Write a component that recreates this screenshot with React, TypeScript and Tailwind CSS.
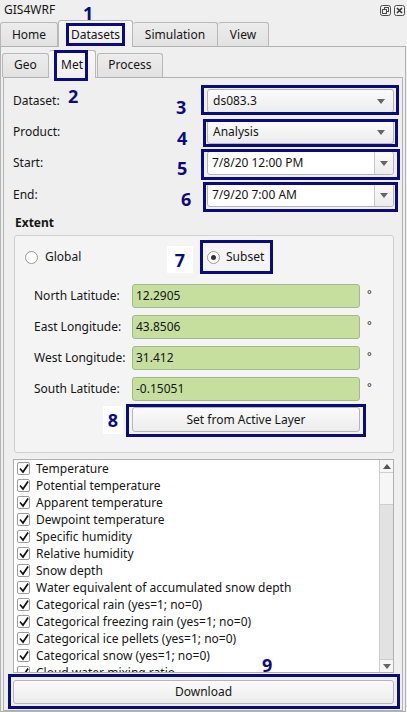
import React from 'react';

const items = [
  'Temperature',
  'Potential temperature',
  'Apparent temperature',
  'Dewpoint temperature',
  'Specific humidity',
  'Relative humidity',
  'Snow depth',
  'Water equivalent of accumulated snow depth',
  'Categorical rain (yes=1; no=0)',
  'Categorical freezing rain (yes=1; no=0)',
  'Categorical ice pellets (yes=1; no=0)',
  'Categorical snow (yes=1; no=0)',
  'Cloud water mixing ratio',
];

function Tri({ up = false }: { up?: boolean }) {
  return (
    <svg width="8" height="5" viewBox="0 0 8 5">
      {up ? <path d="M0 5 L4 0 L8 5 Z" fill="#555" /> : <path d="M0 0 L8 0 L4 5 Z" fill="#666" />}
    </svg>
  );
}

function Combo({ text }: { text: string }) {
  return (
    <div className="flex h-[24px] w-full items-center justify-between rounded-[3px] border border-[#b5b5b5] bg-gradient-to-b from-[#fbfbfb] to-[#ececec] pl-[5px] pr-[8px]">
      <span>{text}</span>
      <Tri />
    </div>
  );
}

function DateEdit({ text }: { text: string }) {
  return (
    <div className="flex h-[24px] w-full items-stretch rounded-[3px] border border-[#b5b5b5] bg-white">
      <span className="flex flex-1 items-center pl-[4px]">{text}</span>
      <span className="flex w-[19px] items-center justify-center rounded-r-[3px] border-l border-[#c8c8c8] bg-gradient-to-b from-[#fbfbfb] to-[#ececec]">
        <Tri />
      </span>
    </div>
  );
}

function Num({ n, className }: { n: string; className: string }) {
  return (
    <span className={`pointer-events-none absolute font-['Noto_Sans',sans-serif] text-[18px] font-bold leading-none text-[#0b0b80] ${className}`}>
      {n}
    </span>
  );
}

function Check() {
  return (
    <span className="flex h-[13px] w-[13px] shrink-0 items-center justify-center rounded-[2px] border border-[#9c9c9c] bg-white">
      <svg width="10" height="10" viewBox="0 0 10 10">
        <path d="M1.6 5.2 L4 8 L8.6 1.2" fill="none" stroke="#111" strokeWidth="1.7" strokeLinecap="square" />
      </svg>
    </span>
  );
}

function Field({ label, value }: { label: string; value: string }) {
  return (
    <div className="flex h-[24px] items-center">
      <span className="box-content w-[98px] shrink-0 pl-[19px]">{label}</span>
      <div className="flex h-[24px] w-[228px] items-center rounded-[3px] border border-[#a4b88e] bg-[#c6df9e] pl-[3px]">
        {value}
      </div>
      <span className="ml-[7px] self-start pt-[2px] text-[11px]">°</span>
    </div>
  );
}

export default function App() {
  return (
    <div className="relative h-[712px] w-[407px] overflow-hidden bg-[#efefef] font-['Noto_Sans',sans-serif] text-[12px] text-[#151515]">
      {/* title bar */}
      <div className="flex h-[20px] items-center justify-between pl-[4px] pr-[2px]">
        <span>GIS4WRF</span>
        <div className="flex items-center gap-[3px]">
          <svg width="11" height="11" viewBox="0 0 11 11">
            <rect x="0.5" y="0.5" width="10" height="10" rx="2" fill="none" stroke="#4a4a4a" />
            <rect x="4.5" y="2.5" width="4" height="4" fill="none" stroke="#4a4a4a" />
            <rect x="2.5" y="4.5" width="4" height="4" fill="#efefef" stroke="#4a4a4a" />
          </svg>
          <svg width="11" height="11" viewBox="0 0 11 11">
            <rect x="0.5" y="0.5" width="10" height="10" rx="2" fill="none" stroke="#4a4a4a" />
            <path d="M3 3 L8 8 M8 3 L3 8" stroke="#333" strokeWidth="1.6" />
          </svg>
        </div>
      </div>

      {/* main tabs */}
      <div className="relative flex h-[26px] items-end">
        <div className="flex h-[24px] w-[58px] items-center justify-center rounded-t-[3px] border border-b-0 border-[#b8b8b8] bg-gradient-to-b from-[#ececec] to-[#e2e2e2]">
          Home
        </div>
        <div className="relative z-10 -mb-px flex h-[27px] w-[75px] items-center justify-center rounded-t-[3px] border border-b-0 border-[#b8b8b8] bg-gradient-to-b from-[#f8f8f8] to-[#efefef] pt-[1px]">
          <span className="relative">
            Datasets
            <span className="pointer-events-none absolute -left-[5px] -right-[5px] -top-[3px] -bottom-[2px] border-[3px] border-[#0b0b80]" />
          </span>
        </div>
        <div className="flex h-[24px] w-[85px] items-center justify-center rounded-t-[3px] border border-b-0 border-l-0 border-[#b8b8b8] bg-gradient-to-b from-[#ececec] to-[#e2e2e2]">
          Simulation
        </div>
        <div className="flex h-[24px] w-[51px] items-center justify-center rounded-t-[3px] border border-b-0 border-l-0 border-[#b8b8b8] bg-gradient-to-b from-[#ececec] to-[#e2e2e2]">
          View
        </div>
        <Num n="1" className="left-[83px] -top-[16px]" />
      </div>

      {/* outer pane */}
      <div className="flex h-[666px] w-[406px] flex-col border border-[#b2b2b2] pt-[2px]">
        {/* sub tabs */}
        <div className="ml-[1px] flex h-[28px] items-end">
          <div className="flex h-[24px] w-[47px] items-center justify-center rounded-t-[3px] border border-b-0 border-[#b8b8b8] bg-gradient-to-b from-[#ececec] to-[#e2e2e2] pb-[1px]">
            Geo
          </div>
          <div className="relative z-10 -mb-px flex h-[28px] w-[47px] items-center justify-center rounded-t-[3px] border border-b-0 border-l-0 border-[#b8b8b8] bg-gradient-to-b from-[#f8f8f8] to-[#efefef]">
            <span className="relative">
              Met
              <span className="pointer-events-none absolute -left-[7px] -right-[5px] -top-[6px] -bottom-[7px] border-[3px] border-[#0b0b80]" />
            </span>
          </div>
          <div className="ml-[1px] flex h-[24px] w-[66px] items-center justify-center rounded-t-[3px] border border-b-0 border-[#b8b8b8] bg-gradient-to-b from-[#ececec] to-[#e2e2e2] pb-[1px]">
            Process
          </div>
        </div>

        {/* inner pane */}
        <div className="mx-[2px] flex flex-1 flex-col border border-[#b2b2b2] pl-[9px] pr-[8px] pt-[11px]">
          {/* form rows */}
          <div className="relative flex h-[24px] items-center justify-between">
            <span>Dataset:</span>
            <Num n="2" className="left-[55px] -top-[2px]" />
            <Num n="3" className="left-[163px] top-[9px]" />
            <div className="relative w-[187px]">
              <Combo text="ds083.3" />
              <span className="pointer-events-none absolute -left-[6px] -right-[5px] -top-[4px] -bottom-[2px] border-[3px] border-[#0b0b80]" />
            </div>
          </div>
          <div className="relative mt-[7px] flex h-[24px] items-center justify-between">
            <span>Product:</span>
            <Num n="4" className="left-[164px] top-[9px]" />
            <div className="relative w-[187px]">
              <Combo text="Analysis" />
              <span className="pointer-events-none absolute -left-[4px] -right-[4px] -top-[1px] -bottom-[3px] border-[3px] border-[#0b0b80]" />
            </div>
          </div>
          <div className="relative mt-[7px] flex h-[24px] items-center justify-between">
            <span>Start:</span>
            <Num n="5" className="left-[164px] top-[8px]" />
            <div className="relative w-[187px]">
              <DateEdit text="7/8/20 12:00 PM" />
              <span className="pointer-events-none absolute -left-[6px] -right-[6px] -top-[2px] -bottom-[5px] border-[3px] border-[#0b0b80]" />
            </div>
          </div>
          <div className="relative mt-[8px] flex h-[24px] items-center justify-between">
            <span>End:</span>
            <Num n="6" className="left-[168px] top-[7px]" />
            <div className="relative w-[187px]">
              <DateEdit text="7/9/20 7:00 AM" />
              <span className="pointer-events-none absolute -left-[4px] -right-[4px] -top-[1px] -bottom-[5px] border-[3px] border-[#0b0b80]" />
            </div>
          </div>

          {/* extent */}
          <div className="ml-[2px] mt-[8px] flex h-[16px] items-center font-bold">Extent</div>
          <div className="ml-[1px] mt-[4px] flex h-[218px] flex-col rounded-[3px] border border-[#cfcfcf] bg-[#f4f4f4]">
            <div className="relative mt-[11px] flex h-[20px] items-center pl-[10px]">
              <div className="flex w-[182px] items-center gap-[7px]">
                <span className="h-[13px] w-[13px] rounded-full border border-[#9a9a9a] bg-white" />
                <span>Global</span>
              </div>
              <div className="relative flex items-center gap-[6px]">
                <span className="flex h-[13px] w-[13px] items-center justify-center rounded-full border border-[#9a9a9a] bg-white">
                  <span className="h-[5px] w-[5px] rounded-full bg-[#333]" />
                </span>
                <span>Subset</span>
                <span className="pointer-events-none absolute -left-[7px] -right-[9px] -top-[8px] -bottom-[8px] border-[3px] border-[#0b0b80]" />
              </div>
              <span className="absolute left-[152px] -top-[1px] flex h-[27px] w-[26px] items-center justify-center bg-white">
                <span className="font-['Noto_Sans',sans-serif] text-[18px] font-bold leading-none text-[#0b0b80]">7</span>
              </span>
            </div>
            <div className="mt-[17px] flex flex-col gap-[7px]">
              <Field label="North Latitude:" value="12.2905" />
              <Field label="East Longitude:" value="43.8506" />
              <Field label="West Longitude:" value="31.412" />
              <Field label="South Latitude:" value="-0.15051" />
            </div>
            <div className="relative ml-[117px] mt-[6px] w-[228px]">
              <div className="flex h-[25px] items-center justify-center rounded-[3px] border border-[#b5b5b5] bg-gradient-to-b from-[#fbfbfb] to-[#ececec]">
                Set from Active Layer
              </div>
              <span className="pointer-events-none absolute -left-[6px] -right-[6px] -top-[3px] -bottom-[5px] border-[3px] border-[#0b0b80]" />
              <span className="absolute -left-[29px] -top-[1px] flex h-[28px] w-[20px] items-center justify-center bg-white">
                <span className="font-['Noto_Sans',sans-serif] text-[18px] font-bold leading-none text-[#0b0b80]">8</span>
              </span>
            </div>
          </div>

          {/* list */}
          <div className="relative mt-[6px] flex h-[214px] border border-[#b0b0b0] bg-white">
            <div className="flex flex-1 flex-col overflow-hidden">
              {items.map((t) => (
                <div key={t} className="flex h-[17px] shrink-0 items-center gap-[6px] whitespace-nowrap pl-[3px]">
                  <Check />
                  <span>{t}</span>
                </div>
              ))}
            </div>
            <div className="flex w-[14px] flex-col border-l border-[#cdcdcd] bg-[#e2e2e2]">
              <div className="flex h-[13px] items-center justify-center border-b border-[#cdcdcd] bg-[#f6f6f6]">
                <Tri up />
              </div>
              <div className="h-[32px] border-b border-[#cdcdcd] bg-[#f6f6f6]" />
              <div className="flex-1" />
              <div className="flex h-[13px] items-center justify-center border-t border-[#cdcdcd] bg-[#f6f6f6]">
                <Tri />
              </div>
            </div>
            <Num n="9" className="left-[248px] top-[196px]" />
          </div>

          {/* download */}
          <div className="relative mt-[7px]">
            <div className="flex h-[24px] items-center justify-center rounded-[3px] border border-[#b5b5b5] bg-gradient-to-b from-[#fbfbfb] to-[#ececec]">
              Download
            </div>
            <span className="pointer-events-none absolute -left-[5px] -right-[6px] -top-[6px] -bottom-[5px] border-[3px] border-[#0b0b80]" />
          </div>
        </div>
      </div>
    </div>
  );
}
